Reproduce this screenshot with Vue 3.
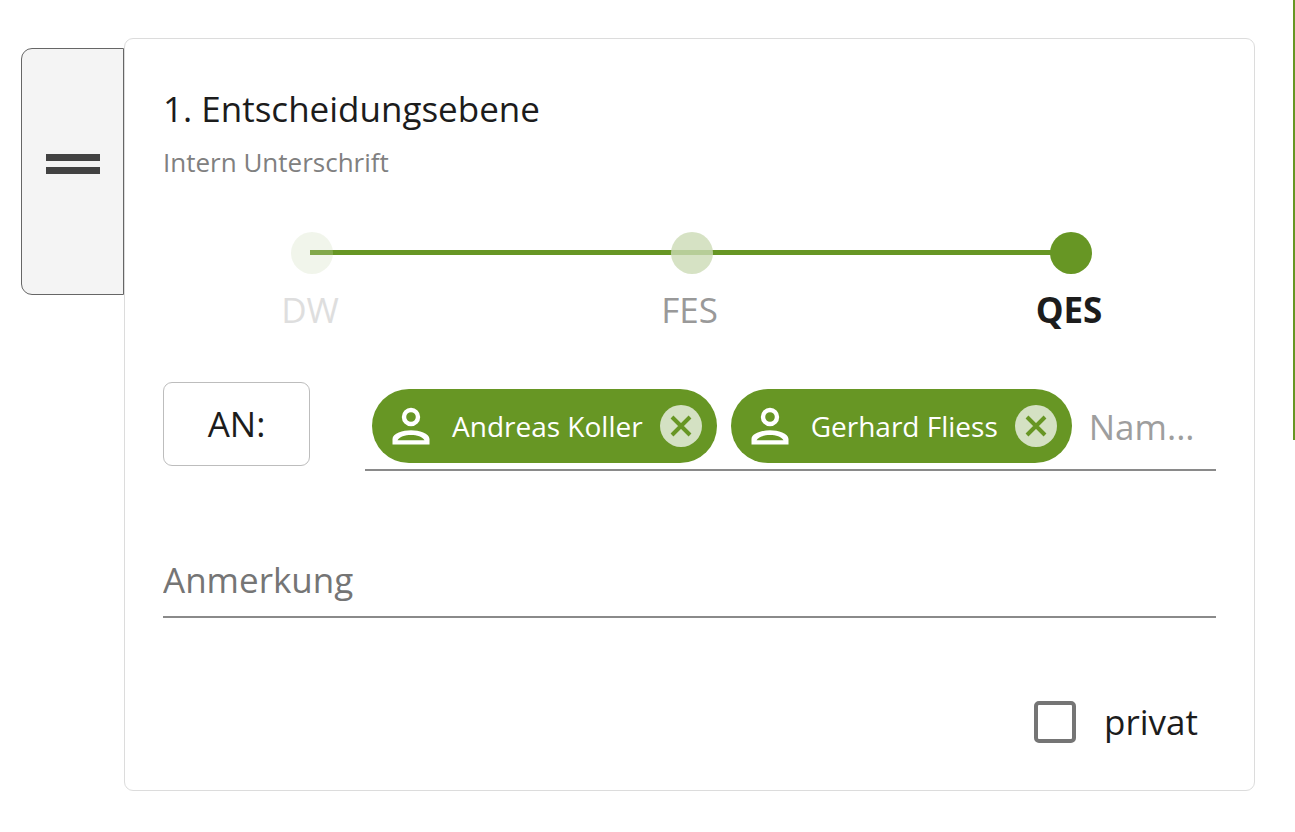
<script setup>
import { ref } from 'vue'

const levels = [
  { id: 'dw', label: 'DW' },
  { id: 'fes', label: 'FES' },
  { id: 'qes', label: 'QES' },
]
const level = ref('qes')
const people = ref(['Andreas Koller', 'Gerhard Fliess'])
const name = ref('')
const note = ref('')
const isPrivate = ref(false)

function removePerson(person) {
  people.value = people.value.filter((p) => p !== person)
}
</script>

<template>
  <div class="page">
    <main class="step">
      <button class="handle" type="button" aria-label="Verschieben">
        <svg width="54" height="22" viewBox="0 0 54 22" aria-hidden="true">
          <path d="M0 1h54v7H0zM0 14h54v7H0z" fill="#424242" />
        </svg>
      </button>

      <section class="card">
        <h1 class="title">1. Entscheidungsebene</h1>
        <p class="subtitle">Intern Unterschrift</p>

        <div class="levels" role="radiogroup" aria-label="Signaturstufe">
          <div class="track"></div>
          <label v-for="l in levels" :key="l.id" class="level" :class="l.id">
            <input v-model="level" class="dot" type="radio" name="level" :value="l.id" />
            <span class="level-name">{{ l.label }}</span>
          </label>
        </div>

        <div class="recipients">
          <button class="to" type="button">AN:</button>
          <div class="field">
            <span v-for="person in people" :key="person" class="chip">
              <svg class="person" width="38" height="38" viewBox="0 0 38 38" aria-hidden="true">
                <circle cx="19" cy="10" r="7" fill="none" stroke="#fff" stroke-width="4.4" />
                <path
                  fill="#fff"
                  fill-rule="evenodd"
                  d="M.5 37.500v-5.500C.5 26.500 11 23.300 19 23.300S37.500 26.500 37.500 32v5.500zM5.500 33.300h27C30.500 29.800 25 28 19 28S7.500 29.800 5.500 33.300z"
                />
              </svg>
              <span>{{ person }}</span>
              <button class="remove" type="button" :aria-label="person + ' entfernen'" @click="removePerson(person)">
                <svg width="42" height="42" viewBox="0 0 42 42" aria-hidden="true">
                  <path d="M12 12l18 18M30 12l-18 18" stroke="#679624" stroke-width="4" />
                </svg>
              </button>
            </span>
            <input v-model="name" class="name" type="text" placeholder="Nam..." aria-label="Name" />
          </div>
        </div>

        <input v-model="note" class="note" type="text" placeholder="Anmerkung" aria-label="Anmerkung" />

        <label class="private">
          <input v-model="isPrivate" class="box" type="checkbox" />
          <span>privat</span>
        </label>
      </section>
    </main>
    <div class="edge"></div>
  </div>
</template>

<style>
body {
  background: #fff;
}
</style>

<style scoped>
.page {
  display: flex;
  font-family: "Segoe UI", "Open Sans", "Noto Sans", sans-serif;
  font-size: 35px;
  line-height: 48px;
  color: #1c1c1c;
}
.page * {
  box-sizing: border-box;
}
button,
input {
  font: inherit;
  color: inherit;
  margin: 0;
  padding: 0;
  border: 0;
  background: none;
}
.step {
  flex: 1;
  min-width: 0;
  display: flex;
  align-items: flex-start;
  padding: 38px 38px 40px 21px;
}
.edge {
  flex: none;
  width: 2px;
  height: 440px;
  background: #679624;
}
.handle {
  flex: none;
  display: grid;
  place-items: center;
  width: 103px;
  margin-top: 10px;
  padding: 104px 0 119px;
  border: 1px solid #666;
  border-radius: 11px 0 0 11px;
  background: #f4f4f4;
}
.handle svg,
.remove svg {
  display: block;
}
.card {
  flex: 1;
  min-width: 0;
  padding: 46px 38px 44px;
  border: 1px solid #dcdcdc;
  border-radius: 9px;
}
.title {
  margin: 0;
  font-size: 35px;
  font-weight: 400;
  line-height: 48px;
}
.subtitle {
  margin: 11px 0 0;
  font-size: 26px;
  line-height: 36px;
  color: #808080;
}
.levels {
  position: relative;
  display: flex;
  justify-content: space-between;
  margin-top: 52px;
  padding: 0 85px 0 89px;
}
.track {
  position: absolute;
  top: 18px;
  left: 147px;
  right: 145px;
  height: 5px;
  background: #679624;
}
.level {
  position: relative;
  display: flex;
  flex-direction: column;
  align-items: center;
  gap: 12px;
  width: 120px;
}
.dot {
  appearance: none;
  width: 42px;
  height: 42px;
  border-radius: 50%;
  background: #ccdbb5;
}
.dw .dot {
  opacity: 0.27;
}
.fes .dot {
  opacity: 0.8;
}
.dot:checked {
  opacity: 1;
  background: #679624;
}
.level-name {
  padding-right: 4px;
}
.dw .level-name {
  color: #dedede;
}
.fes .level-name {
  color: #999;
}
.qes .level-name {
  font-weight: 700;
}
.recipients {
  display: flex;
  align-items: flex-start;
  gap: 55px;
  margin-top: 48px;
}
.to {
  flex: none;
  width: 147px;
  height: 84px;
  border: 1px solid #bdbdbd;
  border-radius: 9px;
}
.field {
  flex: 1;
  min-width: 0;
  display: flex;
  gap: 14px;
  padding: 7px 0 6px 7px;
  border-bottom: 2px solid #8a8a8a;
}
.chip {
  flex: none;
  display: flex;
  align-items: center;
  height: 74px;
  padding: 0 15px 0 20px;
  border-radius: 37px;
  background: #679624;
  color: #fff;
  font-size: 28px;
  white-space: nowrap;
}
.person {
  margin-right: 22px;
}
.remove {
  width: 42px;
  height: 42px;
  margin-left: 17px;
  border-radius: 50%;
  background: #d4e1c3;
}
.name {
  flex: 1;
  min-width: 0;
  padding: 2px 0 0 3px;
}
.name::placeholder {
  color: #9e9e9e;
  opacity: 1;
}
.note {
  display: block;
  width: 100%;
  margin-top: 85px;
  padding-bottom: 12px;
  border-bottom: 2px solid #8a8a8a;
}
.note::placeholder {
  color: #757575;
  opacity: 1;
}
.private {
  display: flex;
  align-items: center;
  justify-content: flex-end;
  gap: 28px;
  margin-top: 80px;
  padding-right: 18px;
}
.box {
  appearance: none;
  width: 42px;
  height: 42px;
  border: 4px solid #757575;
  border-radius: 5px;
}
.box:checked {
  background: #679624;
}
</style>
